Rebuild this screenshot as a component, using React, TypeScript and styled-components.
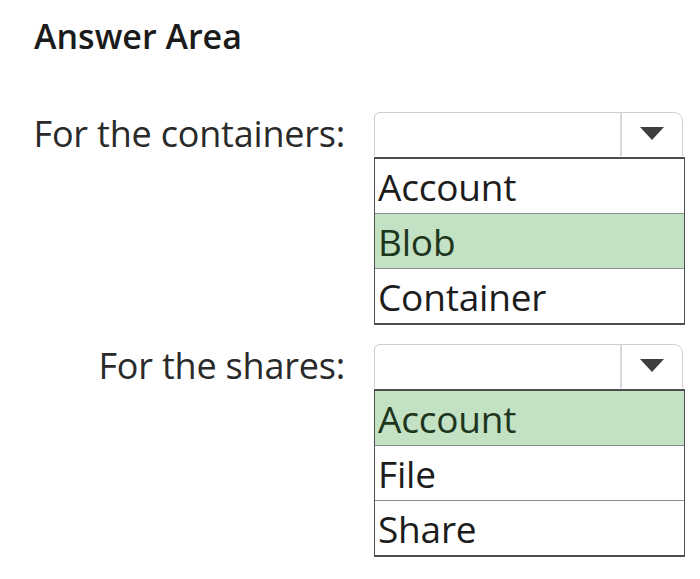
import styled, { createGlobalStyle } from 'styled-components';

const GlobalStyle = createGlobalStyle`
  body {
    margin: 0;
    background: #ffffff;
    font-family: 'Open Sans', 'Noto Sans', sans-serif;
  }
`;

const groups = [
  { label: 'For the containers:', options: ['Account', 'Blob', 'Container'], picked: 1 },
  { label: 'For the shares:', options: ['Account', 'File', 'Share'], picked: 0 },
];

const App = () => {
  return (
    <Page>
      <GlobalStyle />
      <Title>Answer Area</Title>
      <Form>
        {groups.map((g) => (
          <Row key={g.label}>
            <Label>{g.label}</Label>
            <Dropdown>
              <Select>
                <Field />
                <Toggle>
                  <svg width='24' height='13' viewBox='0 0 24 13'>
                    <path d='M0 0 H24 L12 13 Z' fill='#3e3e3e' />
                  </svg>
                </Toggle>
              </Select>
              <List>
                {g.options.map((o, i) => (
                  <Option key={o} $picked={i === g.picked}>
                    {o}
                  </Option>
                ))}
              </List>
            </Dropdown>
          </Row>
        ))}
      </Form>
    </Page>
  );
};

export default App;

const Page = styled.div`
  padding: 16px 0 0 34px;
  width: 700px;
  height: 579px;
  box-sizing: border-box;
`;

const Title = styled.h2`
  margin: 0;
  font-size: 34px;
  line-height: 41px;
  font-weight: 600;
  color: #1b1b1b;
`;

const Form = styled.div`
  display: flex;
  flex-direction: column;
  gap: 19px;
  margin-top: 55px;
`;

const Row = styled.div`
  display: grid;
  grid-template-columns: 311px 311px;
  column-gap: 29px;
  align-items: start;
`;

const Label = styled.div`
  height: 43px;
  display: flex;
  align-items: center;
  justify-content: flex-end;
  font-size: 36px;
  line-height: 43px;
  color: #2a2a2a;
  letter-spacing: -0.2px;
  white-space: nowrap;
`;

const Dropdown = styled.div`
  display: flex;
  flex-direction: column;
  gap: 1px;
`;

const Select = styled.div`
  display: flex;
  height: 43px;
  border: 1px solid #cfcfcf;
  border-bottom: none;
  border-radius: 6px 9px 0 0;
  margin-right: 2px;
  background: #fff;
`;

const Field = styled.div`
  flex: 1;
`;

const Toggle = styled.div`
  width: 60px;
  border-left: 2px solid #d6d6dc;
  display: flex;
  align-items: center;
  justify-content: center;
  padding-bottom: 2px;
`;

const List = styled.div`
  display: flex;
  flex-direction: column;
  border: 2px solid #4e4e4e;
  border-right-width: 1px;
  border-left-width: 1.5px;
  background: #fff;
`;

const Option = styled.div<{ $picked: boolean }>`
  height: 54px;
  line-height: 56px;
  padding-left: 3px;
  font-size: 37px;
  letter-spacing: -0.2px;
  color: ${(p) => (p.$picked ? '#1d361d' : '#1c1c1c')};
  background: ${(p) => (p.$picked ? '#c3e1c3' : '#ffffff')};
  border-bottom: 1px solid #8c8c8c;
  overflow: hidden;

  &:last-child {
    border-bottom: none;
  }
`;
